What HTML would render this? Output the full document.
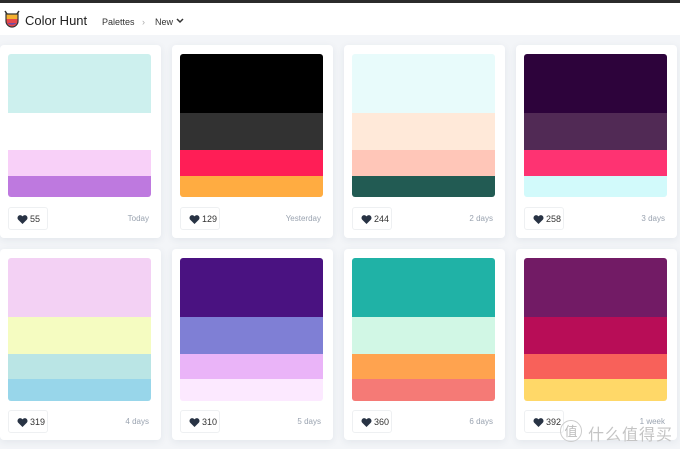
<!DOCTYPE html>
<html><head><meta charset="utf-8"><style>
*{margin:0;padding:0;box-sizing:border-box}
body{width:680px;height:449px;overflow:hidden;background:#f3f5f8;font-family:"Liberation Sans",sans-serif;position:relative}
.top{position:absolute;left:0;top:0;width:680px;height:3px;background:#2b2b2b}
.hdr{position:absolute;left:0;top:3px;width:680px;height:32px;background:#fff}
.logo{position:absolute;left:25px;top:10px;font-size:13px;color:#222}
.nav{position:absolute;top:14px;font-size:9px;color:#333}
.card{position:absolute;width:161px;background:#fff;border-radius:4px;box-shadow:0 2px 8px rgba(40,60,90,.08)}
.pal{position:absolute;left:8px;top:9px;width:143px;border-radius:3px;overflow:hidden}
.pal div{width:100%}
.like{position:absolute;left:8px;width:40px;height:23px;border:1px solid #eef0f2;border-radius:3px;font-size:9px;color:#333;padding:6px 0 0 21px}
.like svg{position:absolute;left:8px;top:7px}
.date{position:absolute;right:12px;font-size:8px;color:#9aa3b0}
</style></head><body>
<div class="top"></div>
<div class="hdr">
<svg style="position:absolute;left:4px;top:6px" width="16" height="20" viewBox="0 0 16 20"><path d="M1 2 L3 5 M15 2 L13 5" stroke="#333" stroke-width="1.5"/><path d="M2 5 H14 V12 A6 6 0 0 1 2 12Z" fill="#f4b02f"/><path d="M2 10 H14 V12 A6 6 0 0 1 2 12Z" fill="#e6484a"/><path d="M3.5 14 H12.5 A6 5 0 0 1 3.5 14Z" fill="#6d4aa6"/><path d="M2 5 H14 V12 A6 6 0 0 1 2 12Z" fill="none" stroke="#333" stroke-width="1.2"/></svg>
<div class="logo">Color Hunt</div>
<div class="nav" style="left:102px">Palettes</div>
<div class="nav" style="left:142px;color:#aaa">›</div>
<div class="nav" style="left:155px">New</div>
<svg style="position:absolute;left:176px;top:15px" width="8" height="6"><path d="M1 1 L4 4 L7 1" stroke="#333" stroke-width="1.5" fill="none"/></svg>
</div>

<!-- row 1 -->
<div class="card" style="left:0;top:45px;height:193px"><div class="pal"><div style="height:59px;background:#cdf0ee"></div><div style="height:37px;background:#fff"></div><div style="height:26px;background:#f8d0f8"></div><div style="height:21px;background:#be79df"></div></div><div class="like" style="top:162px"><svg width="11" height="9" viewBox="0 0 12 10"><path d="M6 10 L1 5 A3 3 0 0 1 6 1.5 A3 3 0 0 1 11 5Z" fill="#283344"/></svg>55</div><div class="date" style="top:169px">Today</div></div>
<div class="card" style="left:172px;top:45px;height:193px"><div class="pal"><div style="height:59px;background:#000"></div><div style="height:37px;background:#323232"></div><div style="height:26px;background:#ff1e56"></div><div style="height:21px;background:#ffac41"></div></div><div class="like" style="top:162px"><svg width="11" height="9" viewBox="0 0 12 10"><path d="M6 10 L1 5 A3 3 0 0 1 6 1.5 A3 3 0 0 1 11 5Z" fill="#283344"/></svg>129</div><div class="date" style="top:169px">Yesterday</div></div>
<div class="card" style="left:344px;top:45px;height:193px"><div class="pal"><div style="height:59px;background:#e8fbfb"></div><div style="height:37px;background:#ffe9d9"></div><div style="height:26px;background:#ffc6b8"></div><div style="height:21px;background:#225b53"></div></div><div class="like" style="top:162px"><svg width="11" height="9" viewBox="0 0 12 10"><path d="M6 10 L1 5 A3 3 0 0 1 6 1.5 A3 3 0 0 1 11 5Z" fill="#283344"/></svg>244</div><div class="date" style="top:169px">2 days</div></div>
<div class="card" style="left:516px;top:45px;height:193px"><div class="pal"><div style="height:59px;background:#2d033b"></div><div style="height:37px;background:#512a55"></div><div style="height:26px;background:#fe3372"></div><div style="height:21px;background:#d2fafb"></div></div><div class="like" style="top:162px"><svg width="11" height="9" viewBox="0 0 12 10"><path d="M6 10 L1 5 A3 3 0 0 1 6 1.5 A3 3 0 0 1 11 5Z" fill="#283344"/></svg>258</div><div class="date" style="top:169px">3 days</div></div>

<!-- row 2 -->
<div class="card" style="left:0;top:249px;height:191px"><div class="pal"><div style="height:59px;background:#f3d1f4"></div><div style="height:37px;background:#f5fcc1"></div><div style="height:25px;background:#bae5e5"></div><div style="height:22px;background:#98d6ea"></div></div><div class="like" style="top:161px"><svg width="11" height="9" viewBox="0 0 12 10"><path d="M6 10 L1 5 A3 3 0 0 1 6 1.5 A3 3 0 0 1 11 5Z" fill="#283344"/></svg>319</div><div class="date" style="top:168px">4 days</div></div>
<div class="card" style="left:172px;top:249px;height:191px"><div class="pal"><div style="height:59px;background:#4a1281"></div><div style="height:37px;background:#7f7fd5"></div><div style="height:25px;background:#eab4f8"></div><div style="height:22px;background:#fce9ff"></div></div><div class="like" style="top:161px"><svg width="11" height="9" viewBox="0 0 12 10"><path d="M6 10 L1 5 A3 3 0 0 1 6 1.5 A3 3 0 0 1 11 5Z" fill="#283344"/></svg>310</div><div class="date" style="top:168px">5 days</div></div>
<div class="card" style="left:344px;top:249px;height:191px"><div class="pal"><div style="height:59px;background:#20b2a6"></div><div style="height:37px;background:#d1f7e5"></div><div style="height:25px;background:#ffa34f"></div><div style="height:22px;background:#f57a76"></div></div><div class="like" style="top:161px"><svg width="11" height="9" viewBox="0 0 12 10"><path d="M6 10 L1 5 A3 3 0 0 1 6 1.5 A3 3 0 0 1 11 5Z" fill="#283344"/></svg>360</div><div class="date" style="top:168px">6 days</div></div>
<div class="card" style="left:516px;top:249px;height:191px"><div class="pal"><div style="height:59px;background:#721b65"></div><div style="height:37px;background:#b80d57"></div><div style="height:25px;background:#f8615a"></div><div style="height:22px;background:#ffd868"></div></div><div class="like" style="top:161px"><svg width="11" height="9" viewBox="0 0 12 10"><path d="M6 10 L1 5 A3 3 0 0 1 6 1.5 A3 3 0 0 1 11 5Z" fill="#283344"/></svg>392</div><div class="date" style="top:168px">1 week</div></div>

<div style="position:absolute;left:560px;top:420px;width:22px;height:22px;border:1px solid #ccc;border-radius:50%;color:#bbb;font-size:13px;text-align:center;line-height:20px;font-family:'Noto Sans CJK SC',sans-serif">值</div>
<div style="position:absolute;left:588px;top:421px;color:#c4c4c4;font-size:16px;font-family:'Noto Sans CJK SC',sans-serif;letter-spacing:1px">什么值得买</div>
</body></html>
